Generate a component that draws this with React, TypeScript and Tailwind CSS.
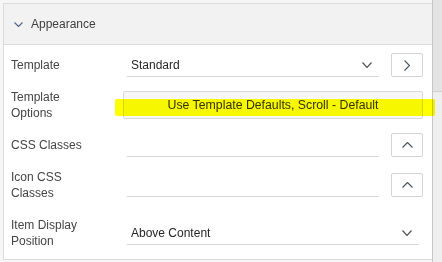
import React from "react";

const Chevron = ({ dir, w, h, color, sw = 1.2 }: { dir: "down" | "up" | "right"; w: number; h: number; color: string; sw?: number }) => {
  let d = "";
  if (dir === "down") d = `M0.5 0.5 L${w / 2} ${h - 0.5} L${w - 0.5} 0.5`;
  if (dir === "up") d = `M0.5 ${h - 0.5} L${w / 2} 0.5 L${w - 0.5} ${h - 0.5}`;
  if (dir === "right") d = `M0.5 0.5 L${w - 0.5} ${h / 2} L0.5 ${h - 0.5}`;
  return (
    <svg width={w} height={h} viewBox={`0 0 ${w} ${h}`} className="block shrink-0">
      <path d={d} fill="none" stroke={color} strokeWidth={sw} />
    </svg>
  );
};

const Label = ({ children }: { children: React.ReactNode }) => (
  <div className="w-[116px] shrink-0 text-[12px] leading-[16px] text-[#444444]">{children}</div>
);

const IconButton = ({ dir }: { dir: "up" | "right" }) => (
  <div className="ml-[12px] w-[32px] h-[24px] shrink-0 border border-[#d4d4d4] rounded-[2px] bg-white flex items-center justify-center">
    {dir === "right" ? (
      <Chevron dir="right" w={6} h={11} color="#4b5563" />
    ) : (
      <Chevron dir="up" w={11} h={6} color="#4b5563" />
    )}
  </div>
);

export default function App() {
  return (
    <div className="relative w-[442px] h-[262px] bg-white flex font-['Liberation_Sans',Arial,sans-serif]">
      <div className="w-[433px] h-full border-r border-[#c6c6c6] bg-[#f6f6f6] pt-[3px] pl-[3px]">
        <div className="w-[429px] h-[257px] border-l border-t border-b border-[#dcdcdc] bg-white flex flex-col">
          <div className="h-[41px] shrink-0 border-b border-[#dcdcdc] bg-[#f2f2f2] flex items-center pl-[10px] gap-[8px]">
            <Chevron dir="down" w={9} h={5} color="#55698a" />
            <span className="text-[12px] leading-[16px] text-[#404040]">Appearance</span>
          </div>
          <div className="flex flex-col pl-[7px]">
            <div className="flex items-center h-[24px] mt-[8px]">
              <Label>Template</Label>
              <div className="w-[252px] h-[24px] border-b border-[#d6d6d6] flex items-center justify-between pl-[4px] pr-[7px] text-[12px] text-[#262626]">
                <span>Standard</span>
                <Chevron dir="down" w={10} h={6} color="#555555" />
              </div>
              <IconButton dir="right" />
            </div>
            <div className="flex items-center h-[28px] mt-[14px]">
              <Label>
                Template
                <br />
                Options
              </Label>
              <div className="ml-[-4px] w-[300px] h-[28px] border border-[#d8d8d8] rounded-[2px] bg-[#f7f7f7] flex items-center justify-center text-[12.3px] text-[#333333]">
                Use Template Defaults, Scroll - Default
              </div>
            </div>
            <div className="flex items-center h-[24px] mt-[14px]">
              <Label>CSS Classes</Label>
              <div className="w-[252px] h-[24px] border-b border-[#d6d6d6]" />
              <IconButton dir="up" />
            </div>
            <div className="flex items-center h-[24px] mt-[16px]">
              <Label>
                Icon CSS
                <br />
                Classes
              </Label>
              <div className="w-[252px] h-[24px] border-b border-[#d6d6d6]" />
              <IconButton dir="up" />
            </div>
            <div className="flex items-center h-[24px] mt-[24px]">
              <Label>
                Item Display
                <br />
                Position
              </Label>
              <div className="w-[292px] h-[24px] border-b border-[#d6d6d6] flex items-center justify-between pl-[4px] pr-[7px] text-[12px] text-[#262626]">
                <span>Above Content</span>
                <Chevron dir="down" w={10} h={6} color="#555555" />
              </div>
            </div>
          </div>
        </div>
      </div>
      <div className="w-[9px] h-full flex flex-col">
        <div className="h-[92px] bg-[#e4e4e4] border-b border-[#cfcfcf]" />
        <div className="flex-1 bg-[#efefef]" />
      </div>
      <div className="absolute left-[115px] top-[99px] w-[320px] h-[17px] bg-[#ffff00] mix-blend-multiply rounded-[2px]" />
    </div>
  );
}
